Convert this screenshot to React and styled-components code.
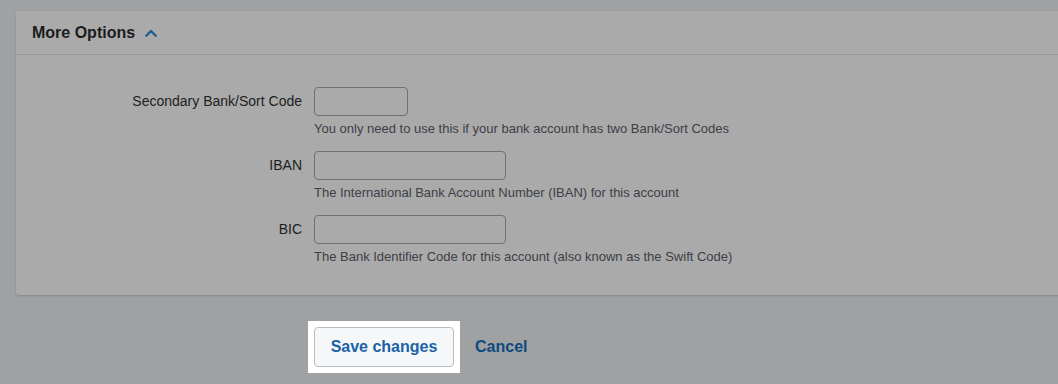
import React from "react";
import styled, { createGlobalStyle } from "styled-components";

const Global = createGlobalStyle`
  html, body { margin: 0; padding: 0; }
  body {
    background: #a0a1a3;
    font-family: "Liberation Sans", Arial, sans-serif;
    overflow: hidden;
  }
`;

const Page = styled.div`
  width: 1058px;
  height: 384px;
  padding: 11px 0 0 16px;
  box-sizing: border-box;
  overflow: hidden;
`;

const Card = styled.section`
  width: 1060px;
  background: #aaaaaa;
  border-radius: 3px 0 0 3px;
  box-shadow: 0 1px 2px rgba(0, 0, 0, 0.18);
`;

const Header = styled.div`
  height: 43px;
  display: flex;
  align-items: center;
  gap: 10px;
  padding-left: 16px;
  border-bottom: 1px solid #979797;
`;

const Title = styled.h2`
  margin: 0;
  font-size: 16px;
  font-weight: 700;
  color: #1b1c1d;
`;

const Chevron = styled.svg`
  width: 12px;
  height: 8px;
  margin-top: 1px;
`;

const Form = styled.div`
  display: grid;
  grid-template-columns: 286px 1fr;
  column-gap: 12px;
  row-gap: 14px;
  padding: 32px 0 30px;
`;

const Label = styled.label`
  text-align: right;
  font-size: 14px;
  line-height: 29px;
  color: #1d1e20;
`;

const Field = styled.div`
  display: flex;
  flex-direction: column;
  align-items: flex-start;
`;

const Input = styled.input`
  box-sizing: border-box;
  width: ${(p) => p.$w}px;
  height: 29px;
  background: transparent;
  border: 1px solid #6e7176;
  border-radius: 4px;
  padding: 0 8px;
  font-family: inherit;
  font-size: 14px;
`;

const Help = styled.div`
  margin-top: 5px;
  font-size: 13px;
  line-height: 16px;
  color: #3c4047;
`;

const Actions = styled.div`
  display: flex;
  align-items: center;
  gap: 15px;
  margin-top: 26px;
  padding-left: 292px;
`;

const Spotlight = styled.div`
  background: #ffffff;
  padding: 6px;
`;

const SaveButton = styled.button`
  box-sizing: border-box;
  width: 140px;
  height: 40px;
  background: #f5f7f9;
  border: 1px solid #b9bdc2;
  border-radius: 4px;
  font-family: inherit;
  font-size: 16px;
  font-weight: 700;
  color: #1a63a6;
  cursor: pointer;
`;

const CancelLink = styled.a`
  font-size: 16px;
  font-weight: 700;
  color: #0d4a7e;
  text-decoration: none;
`;

const fields = [
  {
    label: "Secondary Bank/Sort Code",
    width: 94,
    help: "You only need to use this if your bank account has two Bank/Sort Codes",
  },
  {
    label: "IBAN",
    width: 192,
    help: "The International Bank Account Number (IBAN) for this account",
  },
  {
    label: "BIC",
    width: 192,
    help: "The Bank Identifier Code for this account (also known as the Swift Code)",
  },
];

export default function App() {
  return (
    <Page>
      <Global />
      <Card>
        <Header>
          <Title>More Options</Title>
          <Chevron viewBox="0 0 12 8">
            <path
              d="M1.3 6.7 L6 2 L10.7 6.7"
              fill="none"
              stroke="#1b5c90"
              strokeWidth="2.3"
              strokeLinecap="round"
              strokeLinejoin="round"
            />
          </Chevron>
        </Header>
        <Form>
          {fields.map((f) => (
            <React.Fragment key={f.label}>
              <Label>{f.label}</Label>
              <Field>
                <Input $w={f.width} type="text" />
                <Help>{f.help}</Help>
              </Field>
            </React.Fragment>
          ))}
        </Form>
      </Card>
      <Actions>
        <Spotlight>
          <SaveButton>Save changes</SaveButton>
        </Spotlight>
        <CancelLink href="#">Cancel</CancelLink>
      </Actions>
    </Page>
  );
}
